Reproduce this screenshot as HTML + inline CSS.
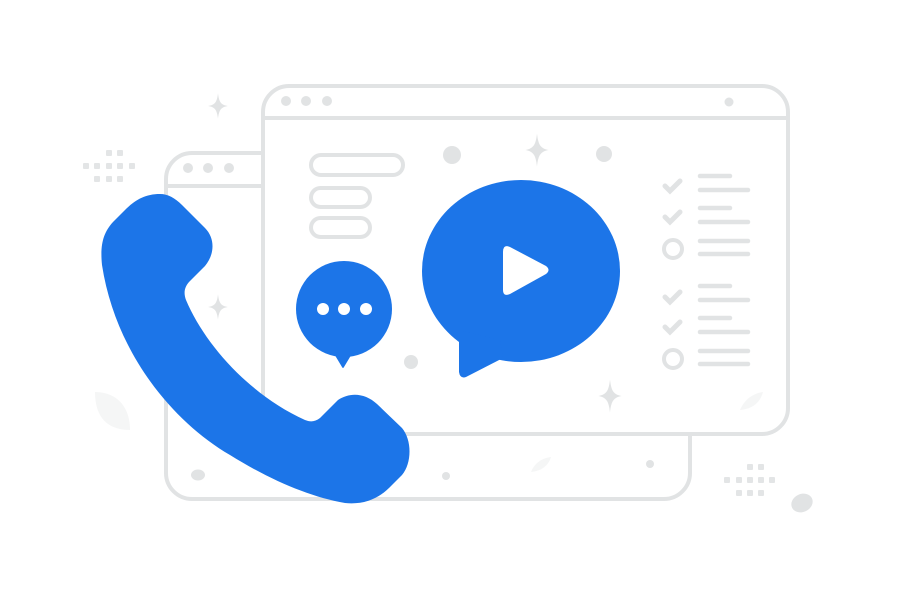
<!DOCTYPE html>
<html><head><meta charset="utf-8"><style>html,body{margin:0;padding:0;background:#fff}svg{display:block}</style></head>
<body>
<svg width="900" height="600" viewBox="0 0 900 600" xmlns="http://www.w3.org/2000/svg">
<defs>
<g id="g3"><rect x="-3" y="-3" width="6" height="6" rx="1" fill="#e3e5e6"/></g>
<path id="star" d="M0,-11 C1,-3 3,-1 9,0 C3,1 1,3 0,11 C-1,3 -3,1 -9,0 C-3,-1 -1,-3 0,-11Z" fill="#e1e3e4"/>
</defs>
<g fill="none" stroke="#e1e3e4" stroke-width="4">
<rect x="166" y="153" width="524" height="346" rx="26" fill="#fff"/>
<line x1="166" y1="186" x2="690" y2="186"/>
<rect x="263" y="86" width="525" height="348" rx="26" fill="#fff"/>
<line x1="263" y1="118" x2="788" y2="118"/>
<rect x="311" y="155" width="92" height="20" rx="10"/>
<rect x="311" y="188" width="59" height="19" rx="9.5"/>
<rect x="311" y="218" width="59" height="19" rx="9.5"/>
<circle cx="673" cy="249" r="9"/>
<circle cx="673" cy="359" r="9"/>
<g stroke-linecap="round" stroke-width="5">
<path d="M665,186 l5,5 l10,-10"/><path d="M665,217 l5,5 l10,-10"/>
<path d="M665,297 l5,5 l10,-10"/><path d="M665,327 l5,5 l10,-10"/>
</g>
<g stroke-linecap="round" stroke-width="4.5">
<line x1="700" y1="176" x2="730" y2="176"/><line x1="700" y1="190" x2="748" y2="190"/>
<line x1="700" y1="208" x2="730" y2="208"/><line x1="700" y1="222" x2="748" y2="222"/>
<line x1="700" y1="241" x2="748" y2="241"/><line x1="700" y1="254" x2="748" y2="254"/>
<line x1="700" y1="286" x2="730" y2="286"/><line x1="700" y1="300" x2="748" y2="300"/>
<line x1="700" y1="318" x2="730" y2="318"/><line x1="700" y1="332" x2="748" y2="332"/>
<line x1="700" y1="351" x2="748" y2="351"/><line x1="700" y1="364" x2="748" y2="364"/>
</g>
</g>
<g fill="#e1e3e4">
<circle cx="188" cy="168" r="5"/><circle cx="208" cy="168" r="5"/><circle cx="229" cy="168" r="5"/>
<circle cx="286" cy="101" r="5"/><circle cx="306" cy="101" r="5"/><circle cx="327" cy="101" r="5"/>
<circle cx="729" cy="102" r="4.5"/>
<circle cx="452" cy="155" r="9"/><circle cx="604" cy="154" r="8"/><circle cx="411" cy="362" r="7"/>
<circle cx="446" cy="476" r="4"/><circle cx="650" cy="464" r="4"/>
<ellipse cx="198" cy="475" rx="7" ry="5.5"/>
<ellipse cx="802" cy="503" rx="11" ry="9" transform="rotate(-25 802 503)"/>
</g>
<path d="M95,392 C115,392 130,405 130,430 C110,430 95,420 95,392Z" fill="#f5f6f6"/>
<path d="M740,410 C745,398 755,393 763,392 C760,403 752,409 740,410Z" fill="#f5f6f6"/>
<path d="M531,472 C535,462 543,458 551,457 C548,467 540,471 531,472Z" fill="#f5f6f6"/>
<use href="#star" transform="translate(537 150) scale(1.3 1.5)"/>
<use href="#star" transform="translate(218 106) scale(1.1 1.15)"/>
<use href="#star" transform="translate(218 307) scale(1.1 1.15)"/>
<use href="#star" transform="translate(610 396) scale(1.3 1.5)"/>
<use href="#g3" x="109" y="153"/><use href="#g3" x="120" y="153"/>
<use href="#g3" x="86" y="166"/><use href="#g3" x="97" y="166"/><use href="#g3" x="109" y="166"/><use href="#g3" x="120" y="166"/><use href="#g3" x="132" y="166"/>
<use href="#g3" x="97" y="179"/><use href="#g3" x="109" y="179"/><use href="#g3" x="120" y="179"/>
<use href="#g3" x="750" y="467"/><use href="#g3" x="761" y="467"/>
<use href="#g3" x="727" y="480"/><use href="#g3" x="739" y="480"/><use href="#g3" x="750" y="480"/><use href="#g3" x="761" y="480"/><use href="#g3" x="772" y="480"/>
<use href="#g3" x="739" y="493"/><use href="#g3" x="750" y="493"/><use href="#g3" x="761" y="493"/>
<g fill="#1c75e8">
<circle cx="344" cy="309" r="48"/>
<path d="M333,352 L342,367 Q343,369 344,367 L353,352Z"/>
<ellipse cx="521" cy="271" rx="99" ry="91"/>
<path d="M459,330 L459,372 Q460,379 466,377 L503,358 L500,340Z"/>
<path d="M160,194 C145,194 135,200 125,210 L113,222 C103,233 100,245 102,265 C115,350 170,420 230,455 C270,480 310,497 345,503 C365,505 380,498 392,485 L402,475 C412,463 412,440 402,428 L377,404 C365,393 350,392 338,400 L320,418 C315,422 310,422 305,420 C250,395 205,345 186,300 C183,292 185,286 190,281 L205,266 C215,254 215,238 205,228 L182,205 C175,198 168,194 160,194Z"/>
</g>
<g fill="#fff">
<circle cx="323" cy="309" r="6"/><circle cx="344" cy="309" r="6"/><circle cx="366" cy="309" r="6"/>
<path d="M503,252 Q503,244 510,247 L546,266 Q551,270 546,274 L510,294 Q503,297 503,290Z"/>
</g>
</svg>
</body></html>
